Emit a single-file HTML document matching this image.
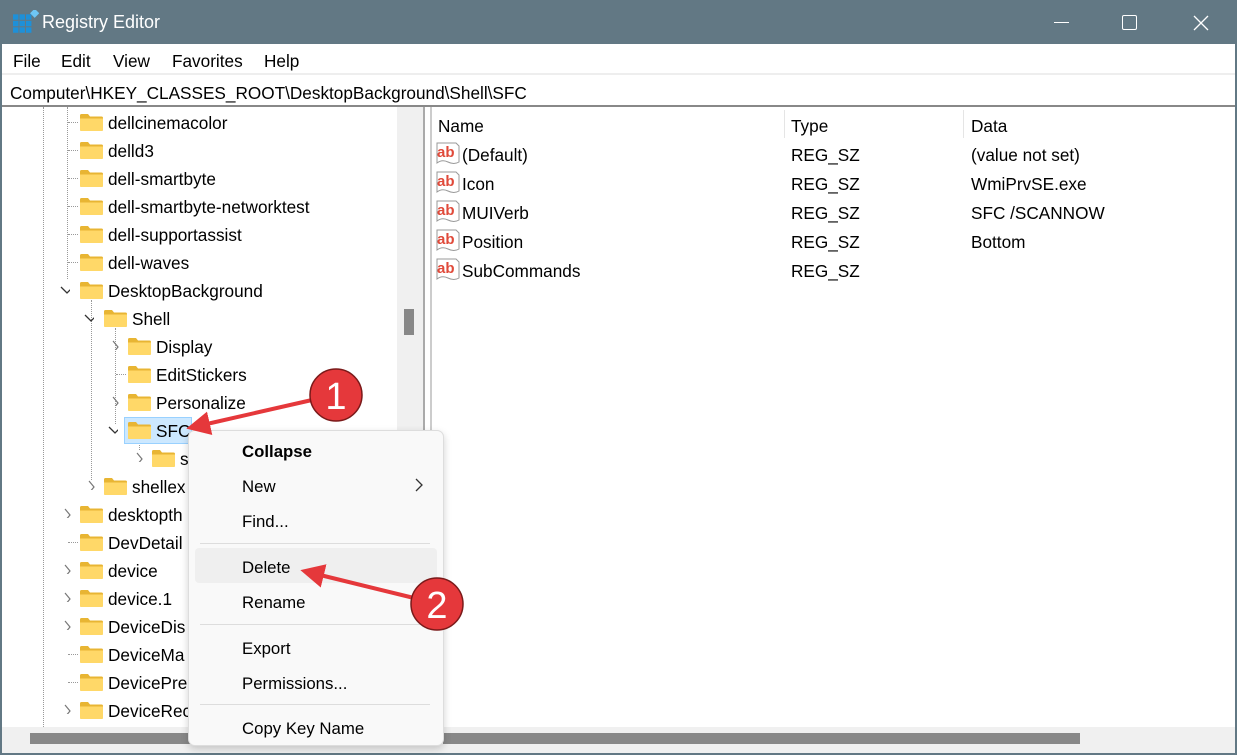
<!DOCTYPE html>
<html><head><meta charset="utf-8"><style>
*{margin:0;padding:0;box-sizing:border-box}
body{width:1237px;height:755px;overflow:hidden;background:#627884;font-family:"Liberation Sans",sans-serif;color:#000;position:relative}
.a{position:absolute;white-space:nowrap}
.t{font-size:17.2px;line-height:20px}
.fold{position:absolute;width:23px;height:17px}
.chev{position:absolute;width:10px;height:10px}
.m{position:absolute;left:242px;font-size:16.8px}
</style></head><body>
<svg class="a" style="left:13px;top:10px" width="26" height="26" viewBox="0 0 24 24">
<g fill="#1e90d8"><rect x="0" y="4" width="5" height="5"/><rect x="6" y="4" width="5" height="5"/><rect x="12" y="4" width="5" height="5"/><rect x="0" y="10" width="5" height="5"/><rect x="6" y="10" width="5" height="5"/><rect x="12" y="10" width="5" height="5"/><rect x="0" y="16" width="5" height="5"/><rect x="6" y="16" width="5" height="5"/><rect x="12" y="16" width="5" height="5"/></g>
<rect x="17" y="0" width="6" height="6" fill="#6ec6f5" transform="rotate(45 20 3)"/></svg>
<div class="a" style="left:42px;top:12px;font-size:18px;color:#fff">Registry Editor</div>
<div class="a" style="left:1054px;top:22px;width:15px;height:1px;background:#fff"></div>
<div class="a" style="left:1122px;top:15px;width:15px;height:15px;border:1.3px solid #fff;border-radius:2px"></div>
<svg class="a" style="left:1193px;top:15px" width="16" height="16"><path d="M1 1L15 15M15 1L1 15" stroke="#fff" stroke-width="1.3"/></svg>
<div class="a" style="left:2px;top:44px;width:1233px;height:709px;background:#fff"></div>
<div class="a t" style="left:13px;top:51px">File</div>
<div class="a t" style="left:61px;top:51px">Edit</div>
<div class="a t" style="left:113px;top:51px">View</div>
<div class="a t" style="left:172px;top:51px">Favorites</div>
<div class="a t" style="left:264px;top:51px">Help</div>
<div class="a" style="left:2px;top:73px;width:1233px;height:2px;background:#eee"></div>
<div class="a t" style="left:10px;top:83px">Computer\HKEY_CLASSES_ROOT\DesktopBackground\Shell\SFC</div>
<div class="a" style="left:2px;top:105px;width:1233px;height:2px;background:#888"></div>
<div class="a" style="left:397px;top:107px;width:26px;height:620px;background:#f0f0f0"></div>
<div class="a" style="left:404px;top:309px;width:10px;height:26px;background:#888"></div>
<div class="a" style="left:423px;top:107px;width:2px;height:620px;background:#aaa"></div>
<div class="a" style="left:430px;top:107px;width:2px;height:620px;background:#ccc"></div>
<div class="a" style="left:43px;top:107px;height:620px;border-left:1px dotted #999"></div>
<div class="a" style="left:67px;top:107px;height:172px;border-left:1px dotted #999"></div>
<div class="a" style="left:91px;top:300px;height:180px;border-left:1px dotted #999"></div>
<div class="a" style="left:115px;top:328px;height:96px;border-left:1px dotted #999"></div>
<div class="a" style="left:139px;top:440px;height:10px;border-left:1px dotted #999"></div>
<div id="tree"></div>
<div class="a t" style="left:438px;top:116px">Name</div>
<div class="a t" style="left:791px;top:116px">Type</div>
<div class="a t" style="left:971px;top:116px">Data</div>
<div class="a" style="left:784px;top:110px;width:1px;height:28px;background:#e5e5e5"></div>
<div class="a" style="left:963px;top:110px;width:1px;height:28px;background:#e5e5e5"></div>
<div id="list"></div>
<div class="a" style="left:2px;top:727px;width:1233px;height:26px;background:#f0f0f0"></div>
<div class="a" style="left:30px;top:733px;width:160px;height:11px;background:#888"></div>
<div class="a" style="left:443px;top:733px;width:637px;height:11px;background:#888"></div>
<div class="a" style="left:188px;top:430px;width:256px;height:316px;background:#f9f9f9;border:1px solid #ddd;border-radius:7px;box-shadow:0 3px 8px rgba(0,0,0,.18)"></div>
<div class="a" style="left:195px;top:548px;width:242px;height:35px;background:#efefef;border-radius:4px"></div>
<div class="m" style="top:442px;font-weight:bold">Collapse</div>
<div class="m" style="top:477px">New</div>
<svg class="a" style="left:414px;top:478px" width="10" height="14"><path d="M2 1l6 6-6 6" fill="none" stroke="#333" stroke-width="1.3"/></svg>
<div class="m" style="top:512px">Find...</div>
<div class="a" style="left:200px;top:543px;width:230px;height:1px;background:#ddd"></div>
<div class="m" style="top:558px">Delete</div>
<div class="m" style="top:593px">Rename</div>
<div class="a" style="left:200px;top:624px;width:230px;height:1px;background:#ddd"></div>
<div class="m" style="top:639px">Export</div>
<div class="m" style="top:674px">Permissions...</div>
<div class="a" style="left:200px;top:704px;width:230px;height:1px;background:#ddd"></div>
<div class="m" style="top:719px">Copy Key Name</div>
<svg class="a" style="left:0;top:0" width="1237" height="755">
<defs><marker id="ah" markerWidth="6" markerHeight="6" refX="3" refY="3" orient="auto"><path d="M0,0L6,3L0,6z" fill="#e5383b"/></marker></defs>
<path d="M312 400L198 426" stroke="#e5383b" stroke-width="4" marker-end="url(#ah)"/>
<path d="M414 598L312 573" stroke="#e5383b" stroke-width="4" marker-end="url(#ah)"/>
<circle cx="336" cy="395" r="26" fill="#e5383b" stroke="#7a1a1a" stroke-width="1.5"/>
<circle cx="437" cy="604" r="26" fill="#e5383b" stroke="#7a1a1a" stroke-width="1.5"/>
<text x="336" y="409" font-family="Liberation Sans" font-size="38" fill="#fff" text-anchor="middle">1</text>
<text x="437" y="618" font-family="Liberation Sans" font-size="38" fill="#fff" text-anchor="middle">2</text>
</svg>
<script>
var rows=[[122,1,"dellcinemacolor",0],[150,1,"delld3",0],[178,1,"dell-smartbyte",0],[206,1,"dell-smartbyte-networktest",0],[234,1,"dell-supportassist",0],[262,1,"dell-waves",0],[290,1,"DesktopBackground",2],[318,2,"Shell",2],[346,3,"Display",1],[374,3,"EditStickers",0],[402,3,"Personalize",1],[430,3,"SFC",2],[458,4,"s",1],[486,2,"shellex",1],[514,1,"desktopth",1],[542,1,"DevDetail",0],[570,1,"device",1],[598,1,"device.1",1],[626,1,"DeviceDis",1],[654,1,"DeviceMa",0],[682,1,"DevicePre",0],[710,1,"DeviceRec",1]];
var h="";
rows.forEach(function(r){var y=r[0],tx=84+24*r[1],fx=tx-28,cx=fx-18;
if(r[2]=="SFC")h+='<div class="a" style="left:'+(fx-4)+'px;top:'+(y-13)+'px;width:68px;height:27px;background:#cce8ff;border:1px solid #99d1ff"></div>';
if(r[3]==0)h+='<div class="a" style="left:'+(fx-12)+'px;top:'+y+'px;width:10px;border-top:1px dotted #999"></div>';
if(r[3]==1)h+='<svg class="chev" style="left:'+cx+'px;top:'+(y-6)+'px" width="10" height="14"><path d="M3 1l5 6-5 6" fill="none" stroke="#777" stroke-width="1.2"/></svg>';
if(r[3]==2)h+='<svg class="chev" style="left:'+(cx-2)+'px;top:'+(y-5)+'px" width="14" height="10"><path d="M1 2l6 6 6-6" fill="none" stroke="#333" stroke-width="1.3"/></svg>';
h+='<svg class="fold" style="left:'+fx+'px;top:'+(y-8)+'px" viewBox="0 0 23 17"><path d="M0 1.5Q0 0 1.5 0H8l2 2.5h11.5Q23 2.5 23 4V15.5Q23 17 21.5 17H1.5Q0 17 0 15.5Z" fill="#e8b533"/><path d="M0 4.5H23V15.5Q23 17 21.5 17H1.5Q0 17 0 15.5Z" fill="#ffd868"/></svg>';
h+='<div class="a t" style="left:'+tx+'px;top:'+(y-9)+'px">'+r[2]+'</div>';});
document.getElementById("tree").innerHTML=h;
var L=[["(Default)","(value not set)"],["Icon","WmiPrvSE.exe"],["MUIVerb","SFC /SCANNOW"],["Position","Bottom"],["SubCommands",""]],g="";
L.forEach(function(v,i){var y=154+29*i;
g+='<svg class="a" style="left:436px;top:'+(y-12)+'px" width="24" height="24"><path d="M1 1H20L23 4V20Q18 23 12 20T1 21Z" fill="#fff" stroke="#999"/><text x="1" y="15" font-family="Liberation Sans" font-weight="bold" font-size="15" fill="#e04a3a">ab</text></svg>';
g+='<div class="a t" style="left:462px;top:'+(y-9)+'px">'+v[0]+'</div><div class="a t" style="left:791px;top:'+(y-9)+'px">REG_SZ</div><div class="a t" style="left:971px;top:'+(y-9)+'px">'+v[1]+'</div>';});
document.getElementById("list").innerHTML=g;
</script>
</body></html>
